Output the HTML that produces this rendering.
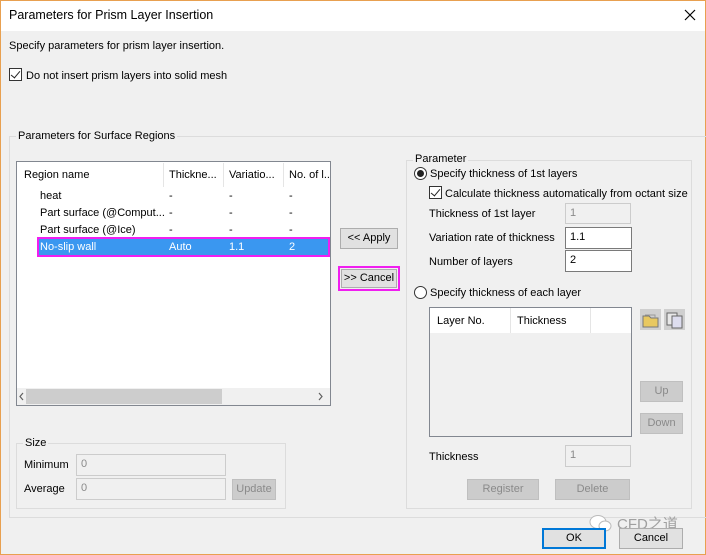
<!DOCTYPE html>
<html><head><meta charset="utf-8"><style>
*{box-sizing:border-box;margin:0;padding:0}
body{width:706px;height:555px;overflow:hidden;background:#f0f0f0;font-family:"Liberation Sans","Noto Sans CJK SC",sans-serif;font-size:11px;color:#000;position:relative}
.a{position:absolute;white-space:nowrap}
.win{position:absolute;left:0;top:0;width:706px;height:555px;border:1px solid #e8a050}
.title{position:absolute;left:1px;top:1px;width:704px;height:30px;background:#fff}
.grp{position:absolute;border:1px solid #dcdcdc}
.lbl{position:absolute;background:#f0f0f0;padding:0 2px;line-height:14px}
.tb{position:absolute;border:1px solid #7a7a7a;background:#fff;padding:2px 4px;line-height:15px}
.tb.d{border-color:#ccc;background:#f0f0f0;color:#8a8a8a}
.btn{position:absolute;background:#e1e1e1;border:1px solid #adadad;text-align:center;line-height:19px}
.btn.d{background:#cccccc;border-color:#bfbfbf;color:#8a8a8a}
.cb{position:absolute;width:13px;height:13px;border:1px solid #333;background:#fff}
.cb:after{content:"";position:absolute;left:3px;top:0px;width:4px;height:8px;border:solid #222;border-width:0 1.5px 1.5px 0;transform:rotate(40deg)}
.rd{position:absolute;width:13px;height:13px;border:1px solid #333;border-radius:50%;background:#fff}
</style></head><body>
<div class="win"></div>
<div class="title"></div>
<div class="a" style="left:9px;top:8px;font-size:12.5px">Parameters for Prism Layer Insertion</div>
<svg class="a" style="left:684px;top:9px" width="12" height="12"><path d="M1 1L11 11M11 1L1 11" stroke="#000" stroke-width="1.2"/></svg>

<div class="a" style="left:9px;top:40px">Specify parameters for prism layer insertion.</div>
<div class="cb" style="left:9px;top:68px"></div>
<div class="a" style="left:26px;top:70px">Do not insert prism layers into solid mesh</div>

<div class="grp" style="left:9px;top:136px;width:700px;height:382px"></div>
<div class="lbl" style="left:16px;top:129px">Parameters for Surface Regions</div>

<div class="a" style="left:16px;top:161px;width:315px;height:245px;border:1px solid #828790;background:#fff"></div>
<div class="a" style="left:163px;top:163px;width:1px;height:24px;background:#e5e5e5"></div>
<div class="a" style="left:223px;top:163px;width:1px;height:24px;background:#e5e5e5"></div>
<div class="a" style="left:283px;top:163px;width:1px;height:24px;background:#e5e5e5"></div>
<div class="a" style="left:24px;top:169px">Region name</div>
<div class="a" style="left:169px;top:169px">Thickne...</div>
<div class="a" style="left:229px;top:169px">Variatio...</div>
<div class="a" style="left:289px;top:169px">No. of l..</div>
<div class="a" style="left:40px;top:190px">heat</div><div class="a" style="left:169px;top:190px">-</div><div class="a" style="left:229px;top:190px">-</div><div class="a" style="left:289px;top:190px">-</div>
<div class="a" style="left:40px;top:207px">Part surface (@Comput...</div><div class="a" style="left:169px;top:207px">-</div><div class="a" style="left:229px;top:207px">-</div><div class="a" style="left:289px;top:207px">-</div>
<div class="a" style="left:40px;top:224px">Part surface (@Ice)</div><div class="a" style="left:169px;top:224px">-</div><div class="a" style="left:229px;top:224px">-</div><div class="a" style="left:289px;top:224px">-</div>
<div class="a" style="left:37px;top:237px;width:293px;height:20px;background:#3a97f0;border:2px solid #f01ef0"></div>
<div class="a" style="left:40px;top:241px;color:#fff">No-slip wall</div><div class="a" style="left:169px;top:241px;color:#fff">Auto</div><div class="a" style="left:229px;top:241px;color:#fff">1.1</div><div class="a" style="left:289px;top:241px;color:#fff">2</div>
<div class="a" style="left:17px;top:388px;width:313px;height:17px;background:#f0f0f0"></div>
<div class="a" style="left:26px;top:389px;width:196px;height:15px;background:#cdcdcd"></div>
<svg class="a" style="left:18px;top:391px" width="8" height="11"><path d="M5 2L2 5.5L5 9" fill="none" stroke="#606060" stroke-width="1.2"/></svg>
<svg class="a" style="left:316px;top:391px" width="8" height="11"><path d="M3 2L6 5.5L3 9" fill="none" stroke="#606060" stroke-width="1.2"/></svg>

<div class="btn" style="left:340px;top:228px;width:58px;height:21px">&lt;&lt; Apply</div>
<div class="a" style="left:338px;top:266px;width:62px;height:25px;border:2px solid #f01ef0"></div>
<div class="btn" style="left:341px;top:269px;width:56px;height:19px;line-height:17px">&gt;&gt; Cancel</div>

<div class="grp" style="left:406px;top:160px;width:286px;height:349px"></div>
<div class="lbl" style="left:413px;top:152px">Parameter</div>
<div class="rd" style="left:414px;top:167px"></div><div class="a" style="left:417px;top:170px;width:7px;height:7px;border-radius:50%;background:#222"></div>
<div class="a" style="left:430px;top:168px">Specify thickness of 1st layers</div>
<div class="cb" style="left:429px;top:186px"></div>
<div class="a" style="left:445px;top:188px">Calculate thickness automatically from octant size</div>
<div class="a" style="left:429px;top:208px">Thickness of 1st layer</div>
<div class="tb d" style="left:565px;top:203px;width:66px;height:21px">1</div>
<div class="a" style="left:429px;top:232px">Variation rate of thickness</div>
<div class="tb" style="left:565px;top:227px;width:67px;height:22px">1.1</div>
<div class="a" style="left:429px;top:256px">Number of layers</div>
<div class="tb" style="left:565px;top:250px;width:67px;height:22px">2</div>
<div class="rd" style="left:414px;top:286px"></div>
<div class="a" style="left:430px;top:287px">Specify thickness of each layer</div>
<div class="a" style="left:429px;top:307px;width:203px;height:130px;border:1px solid #828790;background:#f0f0f0"></div>
<div class="a" style="left:430px;top:308px;width:201px;height:25px;background:#fff"></div>
<div class="a" style="left:510px;top:308px;width:1px;height:25px;background:#e5e5e5"></div>
<div class="a" style="left:590px;top:308px;width:1px;height:25px;background:#e5e5e5"></div>
<div class="a" style="left:437px;top:315px">Layer No.</div>
<div class="a" style="left:517px;top:315px">Thickness</div>
<div class="a" style="left:640px;top:309px;width:21px;height:21px;background:#cfcfcf"></div>
<svg class="a" style="left:641px;top:310px" width="19" height="19"><path d="M2 6h6l2 2h7v9H2z" fill="#e8c860" stroke="#777"/><path d="M4 5h10v3" fill="none" stroke="#999"/></svg>
<div class="a" style="left:664px;top:309px;width:21px;height:21px;background:#cfcfcf"></div>
<svg class="a" style="left:665px;top:310px" width="19" height="19"><rect x="2" y="3" width="10" height="12" fill="#e8e8e8" stroke="#666"/><rect x="7" y="6" width="10" height="12" fill="#dde" stroke="#666"/></svg>
<div class="btn d" style="left:640px;top:381px;width:43px;height:21px">Up</div>
<div class="btn d" style="left:640px;top:413px;width:43px;height:21px">Down</div>
<div class="a" style="left:429px;top:451px">Thickness</div>
<div class="tb d" style="left:565px;top:445px;width:66px;height:22px">1</div>
<div class="btn d" style="left:467px;top:479px;width:72px;height:21px">Register</div>
<div class="btn d" style="left:555px;top:479px;width:75px;height:21px">Delete</div>

<div class="grp" style="left:16px;top:443px;width:270px;height:66px"></div>
<div class="lbl" style="left:23px;top:436px">Size</div>
<div class="a" style="left:24px;top:459px">Minimum</div>
<div class="tb d" style="left:76px;top:454px;width:150px;height:22px">0</div>
<div class="a" style="left:24px;top:483px">Average</div>
<div class="tb d" style="left:76px;top:478px;width:150px;height:22px">0</div>
<div class="btn d" style="left:232px;top:479px;width:44px;height:21px">Update</div>

<svg class="a" style="left:588px;top:513px" width="26" height="20"><ellipse cx="10" cy="9" rx="8" ry="6.5" fill="#fff" stroke="#bbb"/><ellipse cx="17" cy="13" rx="6" ry="5" fill="#fff" stroke="#bbb"/></svg>
<div class="a" style="left:617px;top:513px;color:#a0a0a0;font-size:15px">CFD之道</div>
<div class="btn" style="left:542px;top:528px;width:64px;height:21px;border:2px solid #0078d7;line-height:17px">OK</div>
<div class="btn" style="left:619px;top:528px;width:64px;height:21px">Cancel</div>
</body></html>
